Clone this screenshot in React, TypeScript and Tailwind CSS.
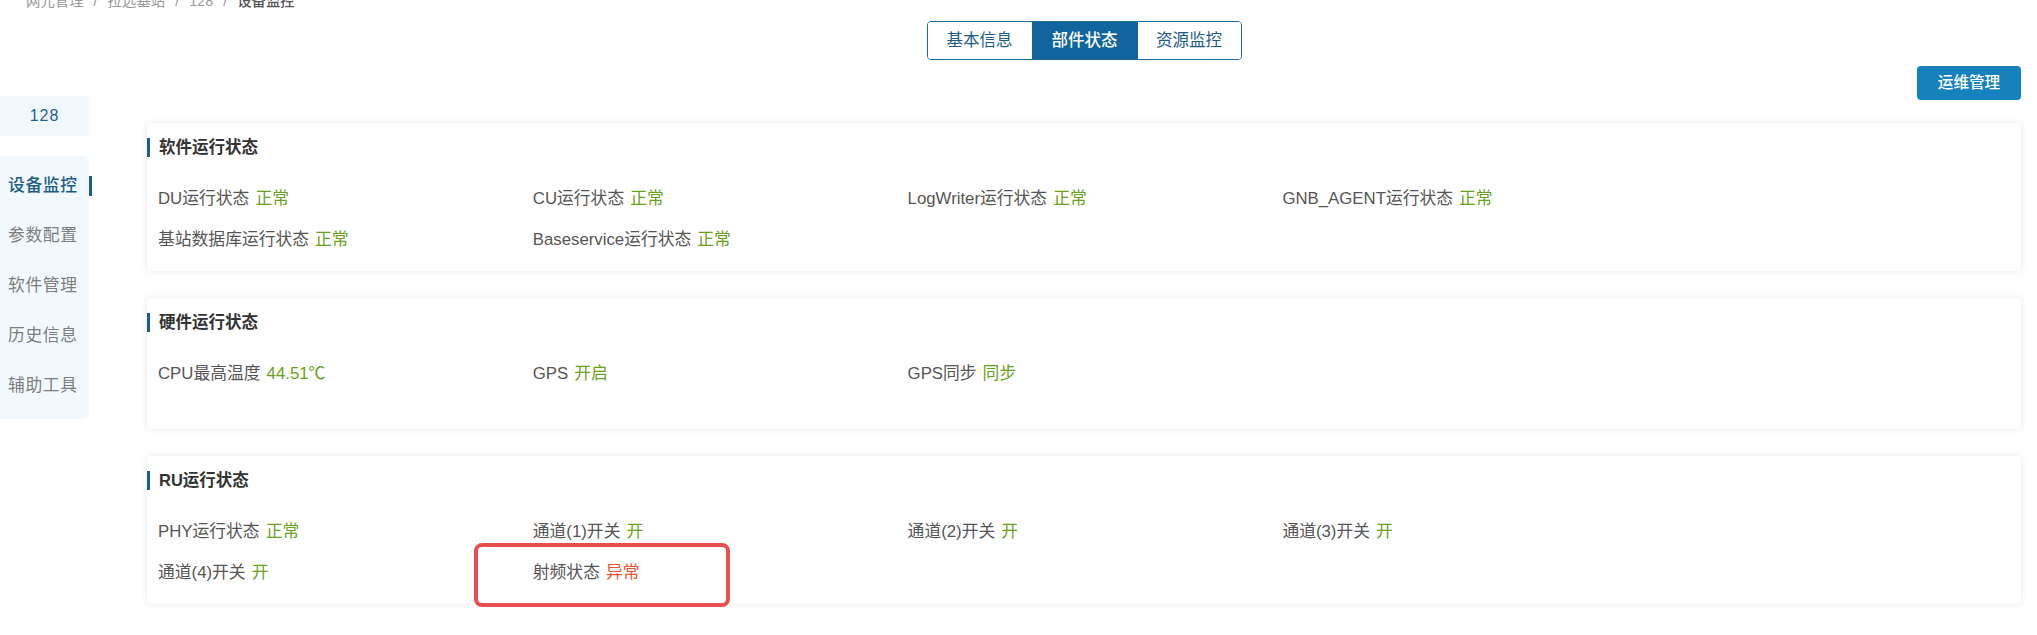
import React from 'react'

type Item = { label: string; value: string; bad?: boolean }

const sections: { title: string; height: string; items: Item[] }[] = [
  {
    title: '软件运行状态',
    height: 'h-[148px]',
    items: [
      { label: 'DU运行状态', value: '正常' },
      { label: 'CU运行状态', value: '正常' },
      { label: 'LogWriter运行状态', value: '正常' },
      { label: 'GNB_AGENT运行状态', value: '正常' },
      { label: '基站数据库运行状态', value: '正常' },
      { label: 'Baseservice运行状态', value: '正常' },
    ],
  },
  {
    title: '硬件运行状态',
    height: 'h-[131px]',
    items: [
      { label: 'CPU最高温度', value: '44.51℃' },
      { label: 'GPS', value: '开启' },
      { label: 'GPS同步', value: '同步' },
    ],
  },
  {
    title: 'RU运行状态',
    height: 'h-[148px]',
    items: [
      { label: 'PHY运行状态', value: '正常' },
      { label: '通道(1)开关', value: '开' },
      { label: '通道(2)开关', value: '开' },
      { label: '通道(3)开关', value: '开' },
      { label: '通道(4)开关', value: '开' },
      { label: '射频状态', value: '异常', bad: true },
    ],
  },
]

const menu = ['设备监控', '参数配置', '软件管理', '历史信息', '辅助工具']

function StatusCard({ title, height, items }: { title: string; height: string; items: Item[] }) {
  // rows wrap every 4 items, the fifth grid column stays empty
  const rows: Item[][] = []
  for (let i = 0; i < items.length; i += 4) rows.push(items.slice(i, i + 4))

  return (
    <div className={`${height} bg-white rounded-[4px] shadow-[0_0_7px_rgba(0,0,0,0.09)] pt-[15px]`}>
      <div className="h-[19px] flex items-center border-l-[3px] border-[#1a5c8a] pl-[9px]">
        <span className="text-[16.5px] font-bold text-[#333]">{title}</span>
      </div>
      <div className="mt-[21px]">
        {rows.map((row, ri) => (
          <div key={ri} className="grid grid-cols-5 h-[41px] items-center">
            {row.map(it => (
              <div key={it.label} className="pl-[11px] text-[16.8px] text-[#555] whitespace-nowrap">
                {it.label}
                <span className={`ml-[6px] ${it.bad ? 'text-[#e8542f]' : 'text-[#6aa11c]'}`}>{it.value}</span>
              </div>
            ))}
          </div>
        ))}
      </div>
    </div>
  )
}

export default function App() {
  return (
    <div className="relative w-[2037px] h-[635px] overflow-hidden bg-white font-['Liberation_Sans','Noto_Sans_CJK_SC',sans-serif]">
      {/* Breadcrumb, clipped at the top edge */}
      <div className="h-[21px] pl-[26px]">
        <div className="-translate-y-[9px] leading-[20px] text-[14.4px] text-[#999] flex gap-[10px]">
          <span>网元管理</span>
          <span>/</span>
          <span>拉远基站</span>
          <span>/</span>
          <span>128</span>
          <span>/</span>
          <span className="text-[#555] font-medium">设备监控</span>
        </div>
      </div>

      <div className="flex">
        {/* Sidebar */}
        <aside className="w-[89px] shrink-0 pt-[75px]">
          <div className="h-[40px] bg-[#f0f8fe] flex items-center justify-center text-[16px] tracking-[1px] text-[#1e5f8c]">
            128
          </div>
          <div className="mt-[20px] bg-[#f2f9fe] rounded-r-[6px] pt-[5px] pb-[8px]">
            {menu.map((m, i) => (
              <div key={m} className="relative h-[50px] flex items-center pl-[8px]">
                <span className={`text-[16.8px] tracking-[0.6px] ${i === 0 ? 'text-[#1c5d8a] font-medium' : 'text-[#7d7d7d]'}`}>
                  {m}
                </span>
                {i === 0 && <span className="absolute left-[89px] top-[15px] w-[3px] h-[20px] bg-[#1c5d8a]" />}
              </div>
            ))}
          </div>
        </aside>

        {/* Main */}
        <main className="flex-1 pl-[58px] pr-[16px]">
          <div className="flex justify-center">
            <div className="flex h-[39px] border border-[#1a6aa0] rounded-[4px] overflow-hidden text-[16.5px]">
              <button className="w-[104px] text-[#1d5b87] bg-white">基本信息</button>
              <button className="w-[106px] text-white bg-[#10659e] font-medium">部件状态</button>
              <button className="w-[103px] text-[#1d5b87] bg-white">资源监控</button>
            </div>
          </div>

          <div className="flex justify-end mt-[6px]">
            <button className="w-[104px] h-[34px] rounded-[4px] bg-[#1682bd] text-white text-[15.6px] font-medium">
              运维管理
            </button>
          </div>

          <div className="mt-[23px] flex flex-col gap-[27px]">
            {sections.map(s => (
              <StatusCard key={s.title} {...s} />
            ))}
          </div>
        </main>
      </div>

      {/* Red annotation box */}
      <div className="absolute left-[474px] top-[543px] w-[256px] h-[64px] border-[4px] border-[#ea4d4d] rounded-[8px]" />
    </div>
  )
}
